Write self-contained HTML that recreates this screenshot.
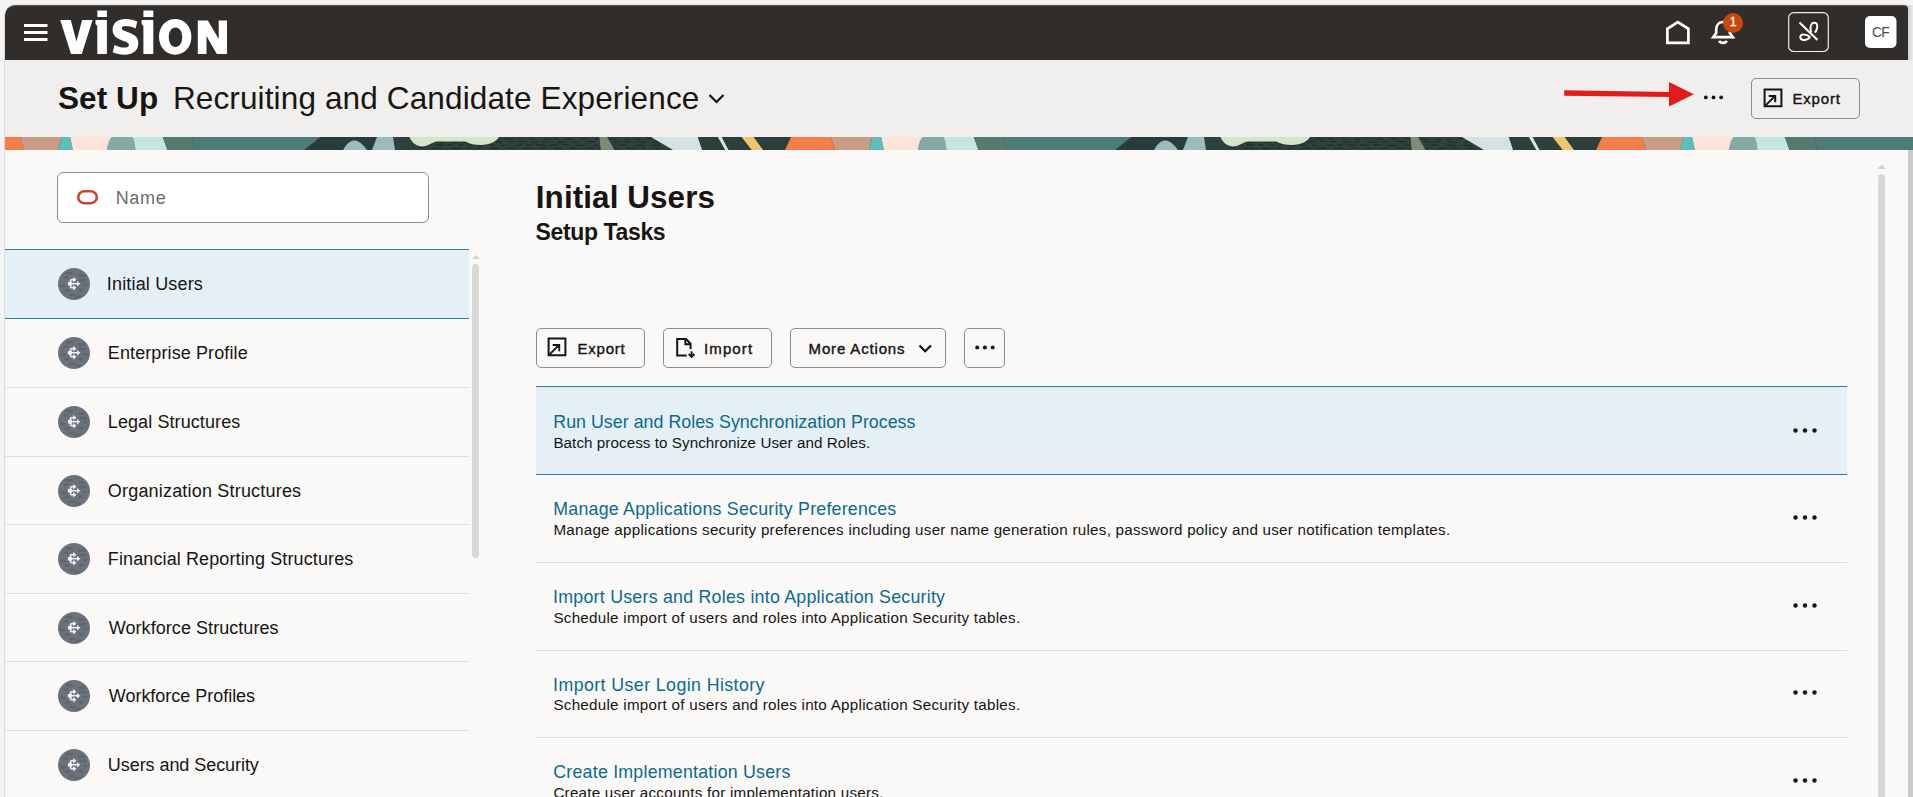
<!DOCTYPE html>
<html><head><meta charset="utf-8">
<style>
*{margin:0;padding:0;box-sizing:border-box;}
html,body{width:1913px;height:797px;overflow:hidden;background:#f4f4f4;font-family:"Liberation Sans",sans-serif;position:relative;}
.a{position:absolute;}
.t{position:absolute;white-space:nowrap;}
#hdr{left:5px;top:5px;width:1903px;height:55px;background:#312d2a;border-top:1px solid #5f5b58;border-radius:10px 4px 0 0;box-shadow:0 -1px 1px rgba(0,0,0,0.08);}
#hshadow{left:1908px;top:5px;width:5px;height:55px;background:linear-gradient(90deg,#cfcfcf,#ececec);}
#sub{left:5px;top:60px;width:1908px;height:77px;background:#f0efed;}
#banner{left:5px;top:137px;width:1908px;height:13px;overflow:hidden;}
#content{left:5px;top:150px;width:1903px;height:647px;background:#faf9f8;}
#lline{left:4px;top:14px;width:1px;height:783px;background:#dcdcdc;}
#rstrip{left:1908px;top:150px;width:5px;height:647px;background:#cbcbcb;}
.btn{position:absolute;border:1px solid #8f8c89;border-radius:5px;background:transparent;}
.bt{position:absolute;font-size:15px;line-height:15px;-webkit-text-stroke:0.4px #161513;color:#161513;white-space:nowrap;}
</style></head><body>
<svg width="0" height="0" style="position:absolute">
 <defs>
  <symbol id="icn" viewBox="0 0 32 32">
   <circle cx="16" cy="16" r="16" fill="#6c727c"/>
   <g fill="#5b6069" opacity="0.75">
    <ellipse cx="11" cy="5" rx="4" ry="1.6"/><ellipse cx="24" cy="7.5" rx="3.5" ry="1.5"/>
    <ellipse cx="8" cy="9.5" rx="2.5" ry="1.3"/><ellipse cx="25" cy="12" rx="4" ry="1.5"/>
    <ellipse cx="5" cy="18" rx="3" ry="1.5"/><ellipse cx="9" cy="22.5" rx="3" ry="1.4"/>
    <ellipse cx="23" cy="22" rx="2.5" ry="1.6"/><ellipse cx="14" cy="27" rx="3.5" ry="1.3"/>
    <ellipse cx="27" cy="17" rx="2" ry="1.2"/><ellipse cx="20" cy="29" rx="3" ry="1.2"/>
   </g>
   <g fill="none" stroke="#f2f2f2" stroke-width="1.5">
    <path d="M12.6 11.7 V19.7"/>
    <path d="M12.6 11.7 H16.5"/><path d="M12.6 19.7 H16.5"/><path d="M12.6 15.7 H20"/>
   </g>
   <g fill="#f2f2f2">
    <circle cx="12" cy="15.7" r="2.3"/>
    <polygon points="15.2,9 18.4,11.7 15.2,14.4"/>
    <polygon points="19,13 22.2,15.7 19,18.4"/>
    <polygon points="15.2,17 18.4,19.7 15.2,22.4"/>
   </g>
  </symbol>
  <symbol id="dots" viewBox="0 0 24 5">
   <circle cx="2.5" cy="2.5" r="2.2" fill="#161513"/><circle cx="12" cy="2.5" r="2.2" fill="#161513"/><circle cx="21.5" cy="2.5" r="2.2" fill="#161513"/>
  </symbol>
  <symbol id="exp" viewBox="0 0 20 20">
   <path d="M1.6 1.6 H18.4 V18.2 H1.6 Z" fill="none" stroke="#161513" stroke-width="2"/>
   <path d="M2.4 17.6 L11.6 8.4" fill="none" stroke="#161513" stroke-width="2"/>
   <path d="M5.7 7.9 H12.2 V14.2" fill="none" stroke="#161513" stroke-width="2"/>
  </symbol>
 </defs>
</svg>
<div id="lline" class="a"></div>
<div id="hdr" class="a"></div>
<div id="hshadow" class="a"></div>
<div id="sub" class="a"></div>
<div id="banner" class="a"></div>
<div id="content" class="a"></div>
<div id="rstrip" class="a"></div>

<!-- HEADER CONTENT -->
<svg class="a" style="left:0;top:0" width="240" height="60" viewBox="0 0 240 60">
 <g fill="#fff">
  <rect x="24" y="24" width="23.5" height="3" />
  <rect x="24" y="31" width="23.5" height="3" />
  <rect x="24" y="38" width="23.5" height="3" />
  <polygon points="60.2,20 70.8,20 76.4,41.5 82.1,20 92.6,20 81.8,53.9 71,53.9"/>
  <rect x="97.3" y="10.5" width="9.6" height="6.5"/>
  <polygon points="95.5,20 106.9,20 106.9,53.9 97.3,53.9 97.3,26 95.5,24"/>
  <rect x="143.4" y="10.5" width="9.9" height="6.5"/>
  <polygon points="141.6,20 153.3,20 153.3,53.9 143.4,53.9 143.4,26 141.6,24"/>
  <path fill-rule="evenodd" d="M175.2 19 C184.5 19 191.4 26.5 191.4 36.85 C191.4 47.2 184.5 54.7 175.2 54.7 C165.9 54.7 159 47.2 159 36.85 C159 26.5 165.9 19 175.2 19 Z M175.5 27.6 C171.5 27.6 168.8 31.5 168.8 37.2 C168.8 42.9 171.5 46.9 175.5 46.9 C179.5 46.9 182.2 42.9 182.2 37.2 C182.2 31.5 179.5 27.6 175.5 27.6 Z"/>
  <polygon points="197.8,20.5 207.9,20.5 218.7,38.9 218.7,20.5 227,20.5 227,53.9 216.8,53.9 206.5,36 206.5,53.9 197.8,53.9"/>
  <path d="M137.3 21.5 L135.6 28.4 C132 26.8 128.5 26 125.6 26 C122.8 26 121.7 27 121.7 28.3 C121.7 29.8 123.6 30.6 127.6 32 C134.6 34.4 138.3 37 138.3 43.2 C138.3 50.6 132.5 54.7 124.6 54.7 C120 54.7 116 53.7 112.6 52.2 L114.6 45 C117.8 46.6 121.4 47.6 124.3 47.6 C127.5 47.6 128.9 46.6 128.9 44.9 C128.9 43.1 127.2 42.3 122.8 40.7 C116.5 38.5 112.6 35.7 112.6 29.6 C112.6 23 118 19 125.6 19 C130 19 134 20 137.3 21.5 Z"/>
 </g>
</svg>
<svg class="a" style="left:1650px;top:5px" width="263" height="55" viewBox="1650 5 263 55">
 <g fill="none" stroke="#fff" stroke-width="2.7" stroke-linejoin="miter">
  <path d="M1667.4 42.8 V28.8 L1677.8 22 L1688.4 28.8 V42.8 Z"/>
 </g>
 <g fill="none" stroke="#fff" stroke-width="2.6">
  <path d="M1713.2 37.1 H1732.8 L1729.8 33 V29.5 C1729.8 25 1727 22 1723 22 C1719 22 1716.2 25 1716.2 29.5 V33 Z"/>
  <path d="M1719.2 40.8 C1720.5 43.6 1725.5 43.6 1726.8 40.8"/>
 </g>
 <circle cx="1733" cy="23" r="10" fill="#c84a0b"/>
 <text x="1733" y="26.4" fill="#fff" font-family="Liberation Sans" font-size="12" text-anchor="middle" stroke="#fff" stroke-width="0.3">1</text>
 <rect x="1788.7" y="12.7" width="39.6" height="38.8" rx="5" fill="none" stroke="#ececec" stroke-width="1.2"/>
 <g fill="none" stroke="#fff" stroke-width="2" stroke-linecap="butt">
  <path d="M1799.5 22.5 L1817.5 40"/>
  <path d="M1811.4 32.6 C1810 30 1810.2 25.8 1811.8 23.8 C1813 22.5 1816 22.5 1816.8 24 C1817.5 26 1817 29.8 1815 32.6"/>
  <path d="M1810.2 37.2 C1808.2 35.4 1805.5 34.4 1803 34.5 C1800.8 34.7 1800 36 1800.4 37.8 C1800.9 39.6 1802.8 40.2 1805 39.9 C1806.8 39.6 1808.6 38.6 1810.2 37.2"/>
 </g>
 <rect x="1865" y="16" width="31.5" height="32" rx="5" fill="#fff"/>
 <text x="1880.5" y="37" fill="#4b4846" font-family="Liberation Sans" font-size="13.8" letter-spacing="-0.6" text-anchor="middle">CF</text>
</svg>

<!-- SUBHEADER CONTENT -->
<svg class="a" style="left:706px;top:90px" width="22" height="18" viewBox="0 0 22 18"><path d="M3.5 5 L10.5 12 L17.5 5" fill="none" stroke="#161513" stroke-width="2.2"/></svg>
<svg class="a" style="left:1560px;top:78px" width="170" height="32" viewBox="1560 78 170 32">
 <polygon points="1564.2,90.2 1670,91.9 1670,97.1 1564.2,95.7" fill="#e21b1b"/>
 <polygon points="1669,82 1693.8,94.3 1669,106.6" fill="#e21b1b"/>
 <circle cx="1705.8" cy="97.4" r="1.9" fill="#161513"/><circle cx="1713.5" cy="97.4" r="1.9" fill="#161513"/><circle cx="1721.2" cy="97.4" r="1.9" fill="#161513"/>
</svg>
<div class="btn" style="left:1751px;top:78px;width:109px;height:41px;background:transparent;"></div>
<svg class="a" style="left:1762.6px;top:87.6px" width="20" height="20"><use href="#exp"/></svg>

<!-- BANNER -->
<svg class="a" style="left:5px;top:137px" width="1908" height="13" viewBox="5 0 1908 13"><defs><g id="btile">
<rect x="0" y="0" width="811" height="13" fill="#2c3f3c"/>
<polygon points="6,0 46,0 50,13 0,13" fill="#f47d48"/>
<polygon points="46,0 87.3,0 84.2,13 50,13" fill="#c99d85"/>
<polygon points="87.3,0 96.2,0 98.9,13 84.2,13" fill="#5cbfba"/>
<polygon points="96.2,0 142,0 142,13 98.9,13" fill="#fde3d8"/>
<polygon points="150,0 188.8,0 193.5,13 150,13" fill="#c5e4e2"/>
<path d="M132.7 13 C134 6 135.3 1.5 137.8 0 L158.3 0 C160 1.5 161 6 161.6 13 Z" fill="#85aaa6"/>
<polygon points="188.8,0 218,0 221,13 193.5,13" fill="#567a70"/>
<polygon points="218,0 346.6,0 330.3,13 221,13" fill="#4e7b7a"/>
<path d="M346.6 0 L403 0 C401 5 399.5 9 398 13 L330.3 13 Z" fill="#283d3b"/>
<path d="M369.2 13 C373 5.5 377 3.6 380.5 3.6 C385 3.6 389 8 393 13 Z" fill="#9bbcbf"/><path d="M403 0 L420 0 L422 13 L398 13 C399.5 9 401 5 403 0 Z" fill="#9bbcbf"/>
<polygon points="419,0 677,0 699,13 421,13" fill="#2e413e"/>
<g fill="#1b2624" opacity="0.75"><rect x="447.6" y="1.6" width="4.8" height="1.1"/><rect x="456.8" y="1.4" width="6.7" height="1.1"/><rect x="467.8" y="1.1" width="6.5" height="1.1"/><rect x="480.9" y="1.2" width="4.3" height="1.1"/><rect x="491.8" y="1.2" width="8.1" height="1.1"/><rect x="505.3" y="1.9" width="7.1" height="1.1"/><rect x="519.9" y="1.9" width="6.0" height="1.1"/><rect x="530.2" y="1.3" width="8.3" height="1.1"/><rect x="543.3" y="1.3" width="4.6" height="1.1"/><rect x="556.8" y="1.6" width="4.9" height="1.1"/><rect x="569.6" y="1.5" width="5.9" height="1.1"/><rect x="579.8" y="1.3" width="4.3" height="1.1"/><rect x="592.2" y="1.4" width="6.1" height="1.1"/><rect x="605.8" y="1.3" width="6.3" height="1.1"/><rect x="620.9" y="1.3" width="7.5" height="1.1"/><rect x="635.8" y="1.8" width="6.6" height="1.1"/><rect x="650.8" y="1.9" width="5.4" height="1.1"/><rect x="661.0" y="1.7" width="6.1" height="1.1"/><rect x="672.0" y="1.1" width="6.4" height="1.1"/><rect x="686.4" y="1.6" width="7.8" height="1.1"/><rect x="447.5" y="4.6" width="7.5" height="1.1"/><rect x="462.5" y="4.8" width="6.3" height="1.1"/><rect x="478.4" y="4.6" width="6.4" height="1.1"/><rect x="489.1" y="4.6" width="7.5" height="1.1"/><rect x="506.6" y="4.3" width="8.1" height="1.1"/><rect x="521.0" y="4.1" width="7.3" height="1.1"/><rect x="535.2" y="4.2" width="4.8" height="1.1"/><rect x="544.3" y="4.2" width="7.8" height="1.1"/><rect x="557.7" y="4.8" width="6.0" height="1.1"/><rect x="568.1" y="4.5" width="6.2" height="1.1"/><rect x="583.7" y="4.8" width="8.1" height="1.1"/><rect x="597.4" y="4.4" width="6.1" height="1.1"/><rect x="612.8" y="4.2" width="8.8" height="1.1"/><rect x="626.7" y="4.3" width="5.2" height="1.1"/><rect x="638.7" y="4.3" width="6.9" height="1.1"/><rect x="649.7" y="4.4" width="6.1" height="1.1"/><rect x="663.2" y="4.7" width="8.8" height="1.1"/><rect x="679.0" y="4.6" width="7.1" height="1.1"/><rect x="690.5" y="4.7" width="8.5" height="1.1"/><rect x="451.4" y="7.4" width="6.0" height="1.1"/><rect x="462.0" y="7.1" width="7.2" height="1.1"/><rect x="473.5" y="7.2" width="5.0" height="1.1"/><rect x="484.6" y="7.1" width="4.3" height="1.1"/><rect x="493.8" y="7.4" width="4.5" height="1.1"/><rect x="502.5" y="7.6" width="8.4" height="1.1"/><rect x="515.7" y="7.4" width="5.3" height="1.1"/><rect x="527.2" y="7.8" width="4.6" height="1.1"/><rect x="541.7" y="7.5" width="6.3" height="1.1"/><rect x="552.6" y="7.4" width="4.5" height="1.1"/><rect x="562.7" y="7.2" width="8.1" height="1.1"/><rect x="575.0" y="7.5" width="8.8" height="1.1"/><rect x="588.6" y="7.1" width="6.7" height="1.1"/><rect x="602.5" y="7.8" width="8.9" height="1.1"/><rect x="619.6" y="7.4" width="5.3" height="1.1"/><rect x="629.9" y="7.5" width="7.9" height="1.1"/><rect x="646.4" y="7.3" width="5.6" height="1.1"/><rect x="660.9" y="7.8" width="8.9" height="1.1"/><rect x="678.7" y="7.7" width="8.1" height="1.1"/><rect x="692.1" y="7.4" width="6.6" height="1.1"/><rect x="445.2" y="10.3" width="5.4" height="1.1"/><rect x="458.8" y="10.5" width="8.8" height="1.1"/><rect x="477.2" y="10.9" width="8.9" height="1.1"/><rect x="492.3" y="10.3" width="5.1" height="1.1"/><rect x="502.6" y="10.6" width="5.0" height="1.1"/><rect x="517.0" y="10.5" width="8.2" height="1.1"/><rect x="533.1" y="10.2" width="8.0" height="1.1"/><rect x="549.1" y="10.7" width="8.5" height="1.1"/><rect x="566.1" y="10.2" width="6.4" height="1.1"/><rect x="581.3" y="10.7" width="5.7" height="1.1"/><rect x="596.8" y="10.4" width="6.0" height="1.1"/><rect x="612.4" y="10.2" width="7.6" height="1.1"/><rect x="624.8" y="10.8" width="4.8" height="1.1"/><rect x="638.4" y="10.8" width="4.7" height="1.1"/><rect x="653.0" y="10.4" width="7.3" height="1.1"/><rect x="667.6" y="10.1" width="4.7" height="1.1"/><rect x="682.1" y="10.5" width="7.2" height="1.1"/><rect x="698.9" y="10.8" width="6.2" height="1.1"/></g>
<path d="M435.5 0 C438 6 443 9.5 448 9.5 C454 9.5 458 5 463 4.5 L491 4.5 C496 7 501 8 507 8 C516 8 523 4 525 0 Z" fill="#d5e6c8"/>
<polygon points="625.5,0 633,0 640.5,13 626.7,13" fill="#7d8c77"/>
<polygon points="677,0 723.7,0 728.1,13 699,13" fill="#d3e3e3"/>
<polygon points="743.8,0 747.6,0 754.5,13 751.3,13" fill="#d8e8df"/>
<polygon points="767.6,0 779.6,0 789,13 777.7,13" fill="#f0c56b"/>
</g></defs><use href="#btile" x="-26" y="0"/><use href="#btile" x="785" y="0"/><use href="#btile" x="1596" y="0"/></svg>

<!-- LEFT PANEL -->
<div class="a" style="left:57px;top:172px;width:372px;height:51px;background:#fff;border:1px solid #8f8c89;border-radius:6px;"></div>
<svg class="a" style="left:75px;top:188px" width="26" height="20" viewBox="0 0 26 20"><rect x="3.2" y="3.2" width="18.6" height="12" rx="6" fill="none" stroke="#c74634" stroke-width="2.6"/></svg>
<div class="a" style="left:5px;top:249px;width:464px;height:70px;background:#e4f0f5;border-top:1px solid #2a7d9e;border-bottom:1px solid #2a7d9e;"></div>
<svg class="a" style="left:58px;top:267.70px;" width="32" height="32" viewBox="0 0 32 32"><use href="#icn"/></svg>
<svg class="a" style="left:58px;top:336.70px;" width="32" height="32" viewBox="0 0 32 32"><use href="#icn"/></svg>
<div class="a" style="left:5px;top:387px;width:464px;height:1px;background:#e0dedb;"></div>
<svg class="a" style="left:58px;top:405.70px;" width="32" height="32" viewBox="0 0 32 32"><use href="#icn"/></svg>
<div class="a" style="left:5px;top:456px;width:464px;height:1px;background:#e0dedb;"></div>
<svg class="a" style="left:58px;top:474.70px;" width="32" height="32" viewBox="0 0 32 32"><use href="#icn"/></svg>
<div class="a" style="left:5px;top:524px;width:464px;height:1px;background:#e0dedb;"></div>
<svg class="a" style="left:58px;top:542.70px;" width="32" height="32" viewBox="0 0 32 32"><use href="#icn"/></svg>
<div class="a" style="left:5px;top:593px;width:464px;height:1px;background:#e0dedb;"></div>
<svg class="a" style="left:58px;top:611.70px;" width="32" height="32" viewBox="0 0 32 32"><use href="#icn"/></svg>
<div class="a" style="left:5px;top:661px;width:464px;height:1px;background:#e0dedb;"></div>
<svg class="a" style="left:58px;top:679.70px;" width="32" height="32" viewBox="0 0 32 32"><use href="#icn"/></svg>
<div class="a" style="left:5px;top:730px;width:464px;height:1px;background:#e0dedb;"></div>
<svg class="a" style="left:58px;top:748.70px;" width="32" height="32" viewBox="0 0 32 32"><use href="#icn"/></svg>
<div class="a" style="left:5px;top:799px;width:464px;height:1px;background:#e0dedb;"></div>
<div class="a" style="left:472px;top:264px;width:7px;height:294px;border-radius:3.5px;background:#d9d8d6;"></div>
<svg class="a" style="left:470px;top:252px" width="12" height="8"><polygon points="2,7 6,3 10,7" fill="#d4d3d1"/></svg>

<!-- MAIN -->

<div class="btn" style="left:536px;top:328px;width:109px;height:39.5px;"></div>
<svg class="a" style="left:546.9px;top:337.4px" width="20" height="20"><use href="#exp"/></svg>
<div class="btn" style="left:663px;top:328px;width:109px;height:39.5px;"></div>
<svg class="a" style="left:674px;top:336px" width="24" height="24" viewBox="0 0 24 24"><g fill="none" stroke="#161513" stroke-width="2"><path d="M12.8 19.6 H3.2 V3.1 H12 L16.6 7.7 V12.9"/><path d="M11.4 3.1 V8.3 H16.6"/><path d="M17.6 15.4 V21"/><path d="M14.8 18 L17.6 20.8 L20.4 18"/></g></svg>
<div class="btn" style="left:790px;top:328px;width:156px;height:39.5px;"></div>
<svg class="a" style="left:916px;top:340.7px" width="18" height="16" viewBox="0 0 18 16"><path d="M3.5 4.5 L9.2 10.2 L15 4.5" fill="none" stroke="#161513" stroke-width="2.2"/></svg>
<div class="btn" style="left:964px;top:328px;width:41px;height:39.5px;"></div>
<svg class="a" style="left:973px;top:345px" width="24" height="5"><circle cx="4.2" cy="2.5" r="2" fill="#161513"/><circle cx="11.9" cy="2.5" r="2" fill="#161513"/><circle cx="19.7" cy="2.5" r="2" fill="#161513"/></svg>

<div class="a" style="left:536px;top:386px;width:1311px;height:89px;background:#e4f0f5;border-top:1px solid #2a7d9e;border-bottom:1px solid #2a7d9e;"></div>
<svg class="a" style="left:1793px;top:427.80px;" width="24" height="5"><use href="#dots"/></svg>
<svg class="a" style="left:1793px;top:515.35px;" width="24" height="5"><use href="#dots"/></svg>
<div class="a" style="left:536px;top:562px;width:1311px;height:1px;background:#e0dedb;"></div>
<svg class="a" style="left:1793px;top:602.90px;" width="24" height="5"><use href="#dots"/></svg>
<div class="a" style="left:536px;top:650px;width:1311px;height:1px;background:#e0dedb;"></div>
<svg class="a" style="left:1793px;top:690.45px;" width="24" height="5"><use href="#dots"/></svg>
<div class="a" style="left:536px;top:737px;width:1311px;height:1px;background:#e0dedb;"></div>
<svg class="a" style="left:1793px;top:778.00px;" width="24" height="5"><use href="#dots"/></svg>
<div class="a" style="left:536px;top:825px;width:1311px;height:1px;background:#e0dedb;"></div>
<div class="t" style="left:58.00px;top:83.10px;font-size:31.5px;line-height:31.5px;font-weight:bold;letter-spacing:0.080px;color:#161513">Set Up</div>
<div class="t" style="left:172.90px;top:82.70px;font-size:31.5px;line-height:31.5px;letter-spacing:0.135px;color:#161513">Recruiting and Candidate Experience</div>
<div class="t" style="left:535.80px;top:181.90px;font-size:31.4px;line-height:31.4px;font-weight:bold;letter-spacing:0.100px;color:#161513">Initial Users</div>
<div class="t" style="left:535.60px;top:221.00px;font-size:23px;line-height:23px;font-weight:bold;letter-spacing:-0.380px;color:#161513">Setup Tasks</div>
<div class="t" style="left:115.70px;top:189.30px;font-size:18px;line-height:18px;letter-spacing:0.667px;color:#6f6c69">Name</div>
<div class="t" style="left:577.50px;top:341.30px;font-size:15px;line-height:15px;-webkit-text-stroke:0.4px #000;letter-spacing:0.760px;color:#161513;-webkit-text-stroke-color:#161513">Export</div>
<div class="t" style="left:704.00px;top:341.30px;font-size:15px;line-height:15px;-webkit-text-stroke:0.4px #000;letter-spacing:1.120px;color:#161513;-webkit-text-stroke-color:#161513">Import</div>
<div class="t" style="left:808.60px;top:341.30px;font-size:15px;line-height:15px;-webkit-text-stroke:0.4px #000;letter-spacing:0.836px;color:#161513;-webkit-text-stroke-color:#161513">More Actions</div>
<div class="t" style="left:1792.40px;top:91.20px;font-size:15px;line-height:15px;-webkit-text-stroke:0.4px #000;letter-spacing:0.840px;color:#161513;-webkit-text-stroke-color:#161513">Export</div>
<div class="t" style="left:106.80px;top:274.66px;font-size:18px;line-height:18px;letter-spacing:0.167px;color:#161513">Initial Users</div>
<div class="t" style="left:107.80px;top:343.66px;font-size:18px;line-height:18px;letter-spacing:0.106px;color:#161513">Enterprise Profile</div>
<div class="t" style="left:107.80px;top:412.66px;font-size:18px;line-height:18px;letter-spacing:0.093px;color:#161513">Legal Structures</div>
<div class="t" style="left:107.80px;top:481.66px;font-size:18px;line-height:18px;letter-spacing:0.191px;color:#161513">Organization Structures</div>
<div class="t" style="left:107.80px;top:549.66px;font-size:18px;line-height:18px;letter-spacing:0.117px;color:#161513">Financial Reporting Structures</div>
<div class="t" style="left:108.80px;top:618.66px;font-size:18px;line-height:18px;letter-spacing:0.053px;color:#161513">Workforce Structures</div>
<div class="t" style="left:108.80px;top:686.66px;font-size:18px;line-height:18px;letter-spacing:-0.024px;color:#161513">Workforce Profiles</div>
<div class="t" style="left:107.80px;top:755.66px;font-size:18px;line-height:18px;letter-spacing:-0.059px;color:#161513">Users and Security</div>
<div class="t" style="left:553.30px;top:414.13px;font-size:17.8px;line-height:17.8px;letter-spacing:0.034px;color:#0a6a8f">Run User and Roles Synchronization Process</div>
<div class="t" style="left:553.40px;top:435.03px;font-size:15.2px;line-height:15.2px;letter-spacing:0.065px;color:#161513">Batch process to Synchronize User and Roles.</div>
<div class="t" style="left:553.30px;top:501.33px;font-size:17.8px;line-height:17.8px;letter-spacing:0.226px;color:#0a6a8f">Manage Applications Security Preferences</div>
<div class="t" style="left:553.40px;top:522.03px;font-size:15.2px;line-height:15.2px;letter-spacing:0.256px;color:#161513">Manage applications security preferences including user name generation rules, password policy and user notification templates.</div>
<div class="t" style="left:553.10px;top:588.93px;font-size:17.8px;line-height:17.8px;letter-spacing:0.243px;color:#0a6a8f">Import Users and Roles into Application Security</div>
<div class="t" style="left:553.40px;top:609.63px;font-size:15.2px;line-height:15.2px;letter-spacing:0.263px;color:#161513">Schedule import of users and roles into Application Security tables.</div>
<div class="t" style="left:553.10px;top:676.53px;font-size:17.8px;line-height:17.8px;letter-spacing:0.408px;color:#0a6a8f">Import User Login History</div>
<div class="t" style="left:553.40px;top:697.23px;font-size:15.2px;line-height:15.2px;letter-spacing:0.263px;color:#161513">Schedule import of users and roles into Application Security tables.</div>
<div class="t" style="left:553.30px;top:764.13px;font-size:17.8px;line-height:17.8px;letter-spacing:0.223px;color:#0a6a8f">Create Implementation Users</div>
<div class="t" style="left:553.40px;top:784.83px;font-size:15.2px;line-height:15.2px;letter-spacing:0.240px;color:#161513">Create user accounts for implementation users.</div>
<div class="a" style="left:1878px;top:173.5px;width:7px;height:630px;border-radius:3.5px;background:#d9d8d6;"></div>
<svg class="a" style="left:1875px;top:162px" width="12" height="8"><polygon points="2,7 6.5,2.5 11,7" fill="#d4d3d1"/></svg>

</body></html>
